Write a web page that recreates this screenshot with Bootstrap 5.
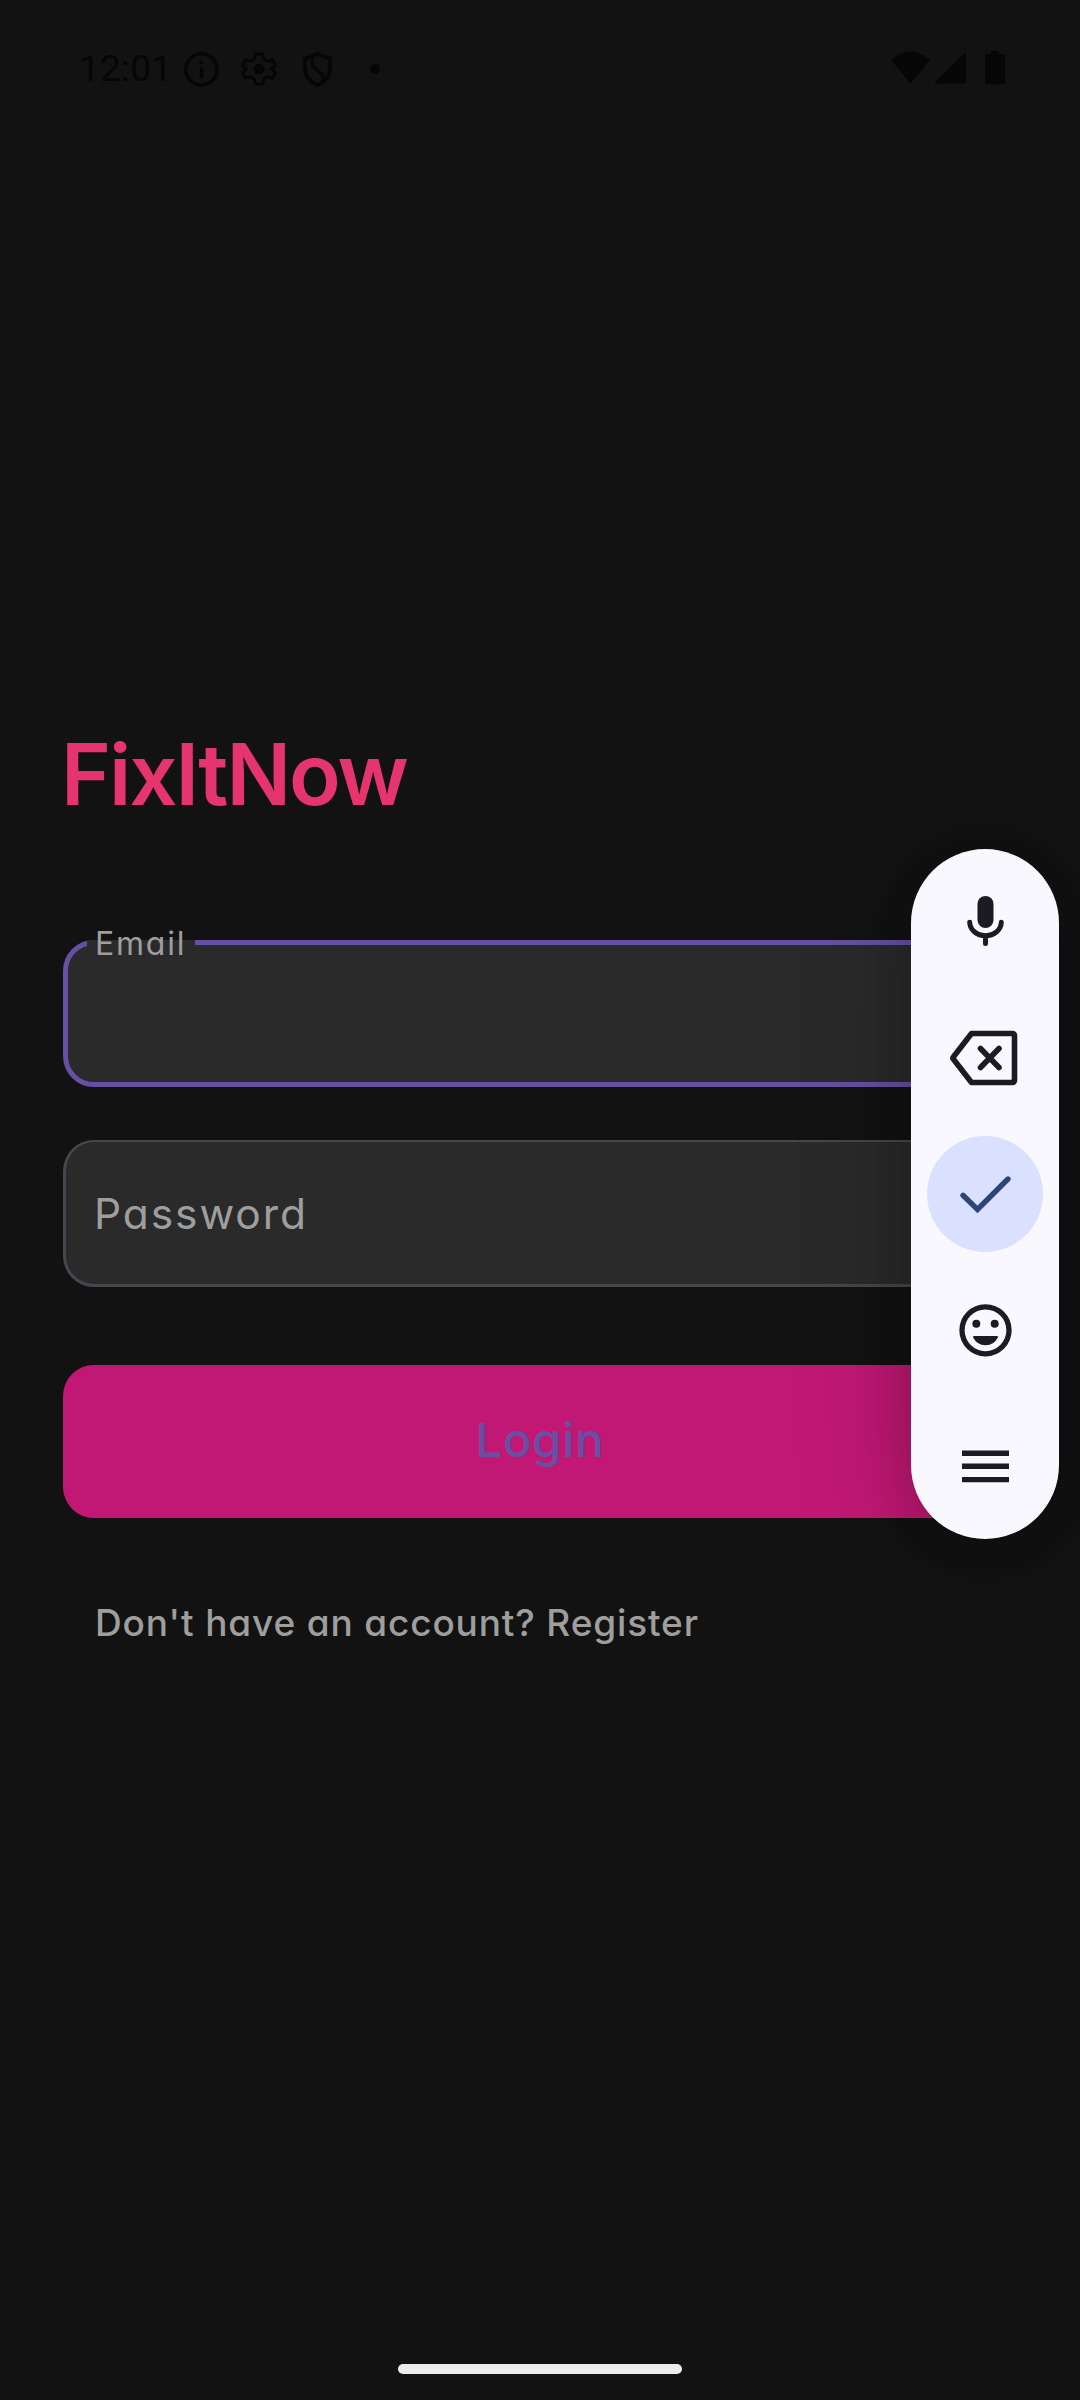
<!DOCTYPE html>
<html lang="en">
<head>
<meta charset="utf-8">
<meta name="viewport" content="width=device-width, initial-scale=1">
<title>FixItNow</title>
<link href="https://cdn.jsdelivr.net/npm/bootstrap@5.3.0/dist/css/bootstrap.min.css" rel="stylesheet">
<style>
  html, body { height: 2400px; overflow: hidden; }
  body { background: #121212; font-family: Inter, "Open Sans", sans-serif; font-feature-settings: "cv11"; width: 1080px; }
  .screen { height: 2400px; }
  .status { height: 137px; padding: 48px 75px 0 79px; color: #060606; }
  .clock { font: 400 37px/42px Roboto, sans-serif; width: 100px; letter-spacing: .2px; white-space: nowrap; }
  .status svg { display: block; }
  .login { padding: 0 63px; margin-top: 588px; }
  .brand { font-size: 85px; line-height: 100px; font-weight: 600; color: #e6346f; letter-spacing: -2px; margin: 0 0 115px -2px; }
  .field { height: 147px; border-radius: 31px; background: #2a2a2a; color: #9e9e9e; }
  .field-active { border: 5px solid #6750a4; margin-bottom: 53px; }
  .field-idle { border: 3px solid #49454f; border-top-width: 2px; padding: 1px 0 0 28px; font-size: 42.5px; letter-spacing: 1.9px; font-weight: 370; }
  .float-label { top: -20px; left: 19px; font-size: 32px; line-height: 38px; font-weight: 370; letter-spacing: 1.8px; padding: 0 9px 0 8px; z-index: 1; }
  .float-label::before { content: ""; position: absolute; z-index: -1; left: 0; right: 0; top: 15px; height: 9px; background: #2a2a2a; }
  .btn-login, .btn-login:hover { height: 153px; border-radius: 31px; background: #c21875; color: #6750a4; border: 0; font-size: 47px; line-height: 56px; font-weight: 500; letter-spacing: 1px; margin-top: 78px; padding: 0 0 4px; }
  .register { margin: 81px 0 0 32px; font-size: 37px; line-height: 48px; font-weight: 470; letter-spacing: .85px; color: #9e9e9e; white-space: nowrap; }
  .keys { left: 911px; top: 849px; width: 148px; height: 690px; border-radius: 74px; background: #f9f8ff; box-shadow: 0 12px 110px rgba(0,0,0,.3), 0 6px 40px rgba(0,0,0,.08); gap: 20px; padding: 15px 16px; z-index: 5; }
  .key { width: 116px; height: 116px; color: #1b1b21; }
  .key-ok { background: #dae1ff; color: #2f4578; }
  .homebar { width: 284px; height: 10px; border-radius: 5px; background: #ececec; margin-bottom: 26px; }
</style>
</head>
<body>
<div class="screen d-flex flex-column position-relative">
  <header class="status d-flex justify-content-between align-items-start">
    <div class="d-flex">
      <span class="clock">12:01</span>
      <svg width="215" height="42" viewBox="179 48 215 42" fill="none" stroke="#060606" stroke-width="3.6">
        <circle cx="201.500" cy="69.500" r="15.700"/>
        <path d="M201.500 67.500v10.500"/><circle cx="201.500" cy="62.500" r="2" fill="#060606" stroke="none"/>
        <path stroke-width="3" stroke-linejoin="round" d="M255.500 54h7l1.300 5.200 3.700 2.100 5-1.500 3 5.300-3.700 3.700v.4l3.700 3.700-3 5.300-5-1.500-3.700 2.100-1.300 5.200h-7l-1.300-5.200-3.700-2.100-5 1.500-3-5.300 3.700-3.700v-.4l-3.700-3.700 3-5.300 5 1.500 3.700-2.100z"/>
        <circle cx="259" cy="69" r="5.500" fill="#060606" stroke="none"/>
        <path d="M317.500 54l12.500 4.500v10c0 8-5 13.500-12.500 16.500-7.500-3-12.500-8.500-12.500-16.500v-10z"/>
        <path stroke-width="3" d="M312 57c-1 7 0 9 5 13s9 6 4 13"/>
        <circle cx="375" cy="69" r="5" fill="#060606" stroke="none"/>
      </svg>
    </div>
    <svg width="115" height="42" viewBox="890 48 115 42" fill="#060606">
      <path d="M891 60q19.500-17 39 0L910.500 83.500zM966 52v31.500h-32zM991 51h8v3h4q2 0 2 2v26.500q0 2-2 2h-16q-2 0-2-2V56q0-2 2-2h4z"/>
    </svg>
  </header>

  <main class="login d-flex flex-column">
    <h1 class="brand">FixItNow</h1>
    <div class="field field-active position-relative">
      <label class="float-label position-absolute">Email</label>
    </div>
    <div class="field field-idle d-flex align-items-center">Password</div>
    <button type="button" class="btn btn-login w-100">Login</button>
    <a class="register text-decoration-none align-self-start">Don't have an account? Register</a>
  </main>

  <aside class="keys position-absolute d-flex flex-column align-items-center">
    <div class="key d-flex align-items-center justify-content-center">
      <svg width="116" height="116" viewBox="927 864 116 116" fill="none" stroke="currentColor" stroke-width="5" stroke-linecap="round">
        <rect x="977.500" y="896" width="16" height="32" rx="8" fill="currentColor" stroke="none"/>
        <path d="M969.700 922.300a15.800 13.400 0 0 0 31.600 0M985.500 936v7.500"/>
      </svg>
    </div>
    <div class="key d-flex align-items-center justify-content-center">
      <svg width="116" height="116" viewBox="927 1000 116 116" fill="none" stroke="currentColor" stroke-width="5.600" stroke-linejoin="round" stroke-linecap="round">
        <path d="M971.500 1033.500h41a2 2 0 0 1 2 2v45a2 2 0 0 1-2 2h-41l-18-23.200a2 2 0 0 1 0-2.600z"/>
        <path d="M980.500 1048.500l18.500 19M999 1048.500l-18.500 19"/>
      </svg>
    </div>
    <div class="key key-ok rounded-circle d-flex align-items-center justify-content-center">
      <svg width="116" height="116" viewBox="927 1136 116 116" fill="none" stroke="currentColor" stroke-width="5.400" stroke-linecap="round">
        <path d="M963 1195.300l14.500 14.200L1008 1179"/>
      </svg>
    </div>
    <div class="key d-flex align-items-center justify-content-center">
      <svg width="116" height="116" viewBox="927 1272 116 116" fill="currentColor">
        <circle cx="985.500" cy="1330.300" r="23.500" fill="none" stroke="currentColor" stroke-width="5.300"/>
        <circle cx="976.300" cy="1323.700" r="4"/><circle cx="994.700" cy="1323.700" r="4"/>
        <path d="M974 1336h23q1.500 0 .8 1.600a13.500 13 0 0 1-24.600 0q-.7-1.600.8-1.600z"/>
      </svg>
    </div>
    <div class="key d-flex align-items-center justify-content-center">
      <svg width="116" height="116" viewBox="927 1408 116 116" fill="currentColor">
        <path d="M962 1450.500h47v5.500h-47zM962 1463.500h47v5.500h-47zM962 1477h47v5.300h-47z"/>
      </svg>
    </div>
  </aside>

  <div class="homebar mt-auto mx-auto"></div>
</div>
<script src="https://cdn.jsdelivr.net/npm/bootstrap@5.3.0/dist/js/bootstrap.bundle.min.js"></script>
</body>
</html>
